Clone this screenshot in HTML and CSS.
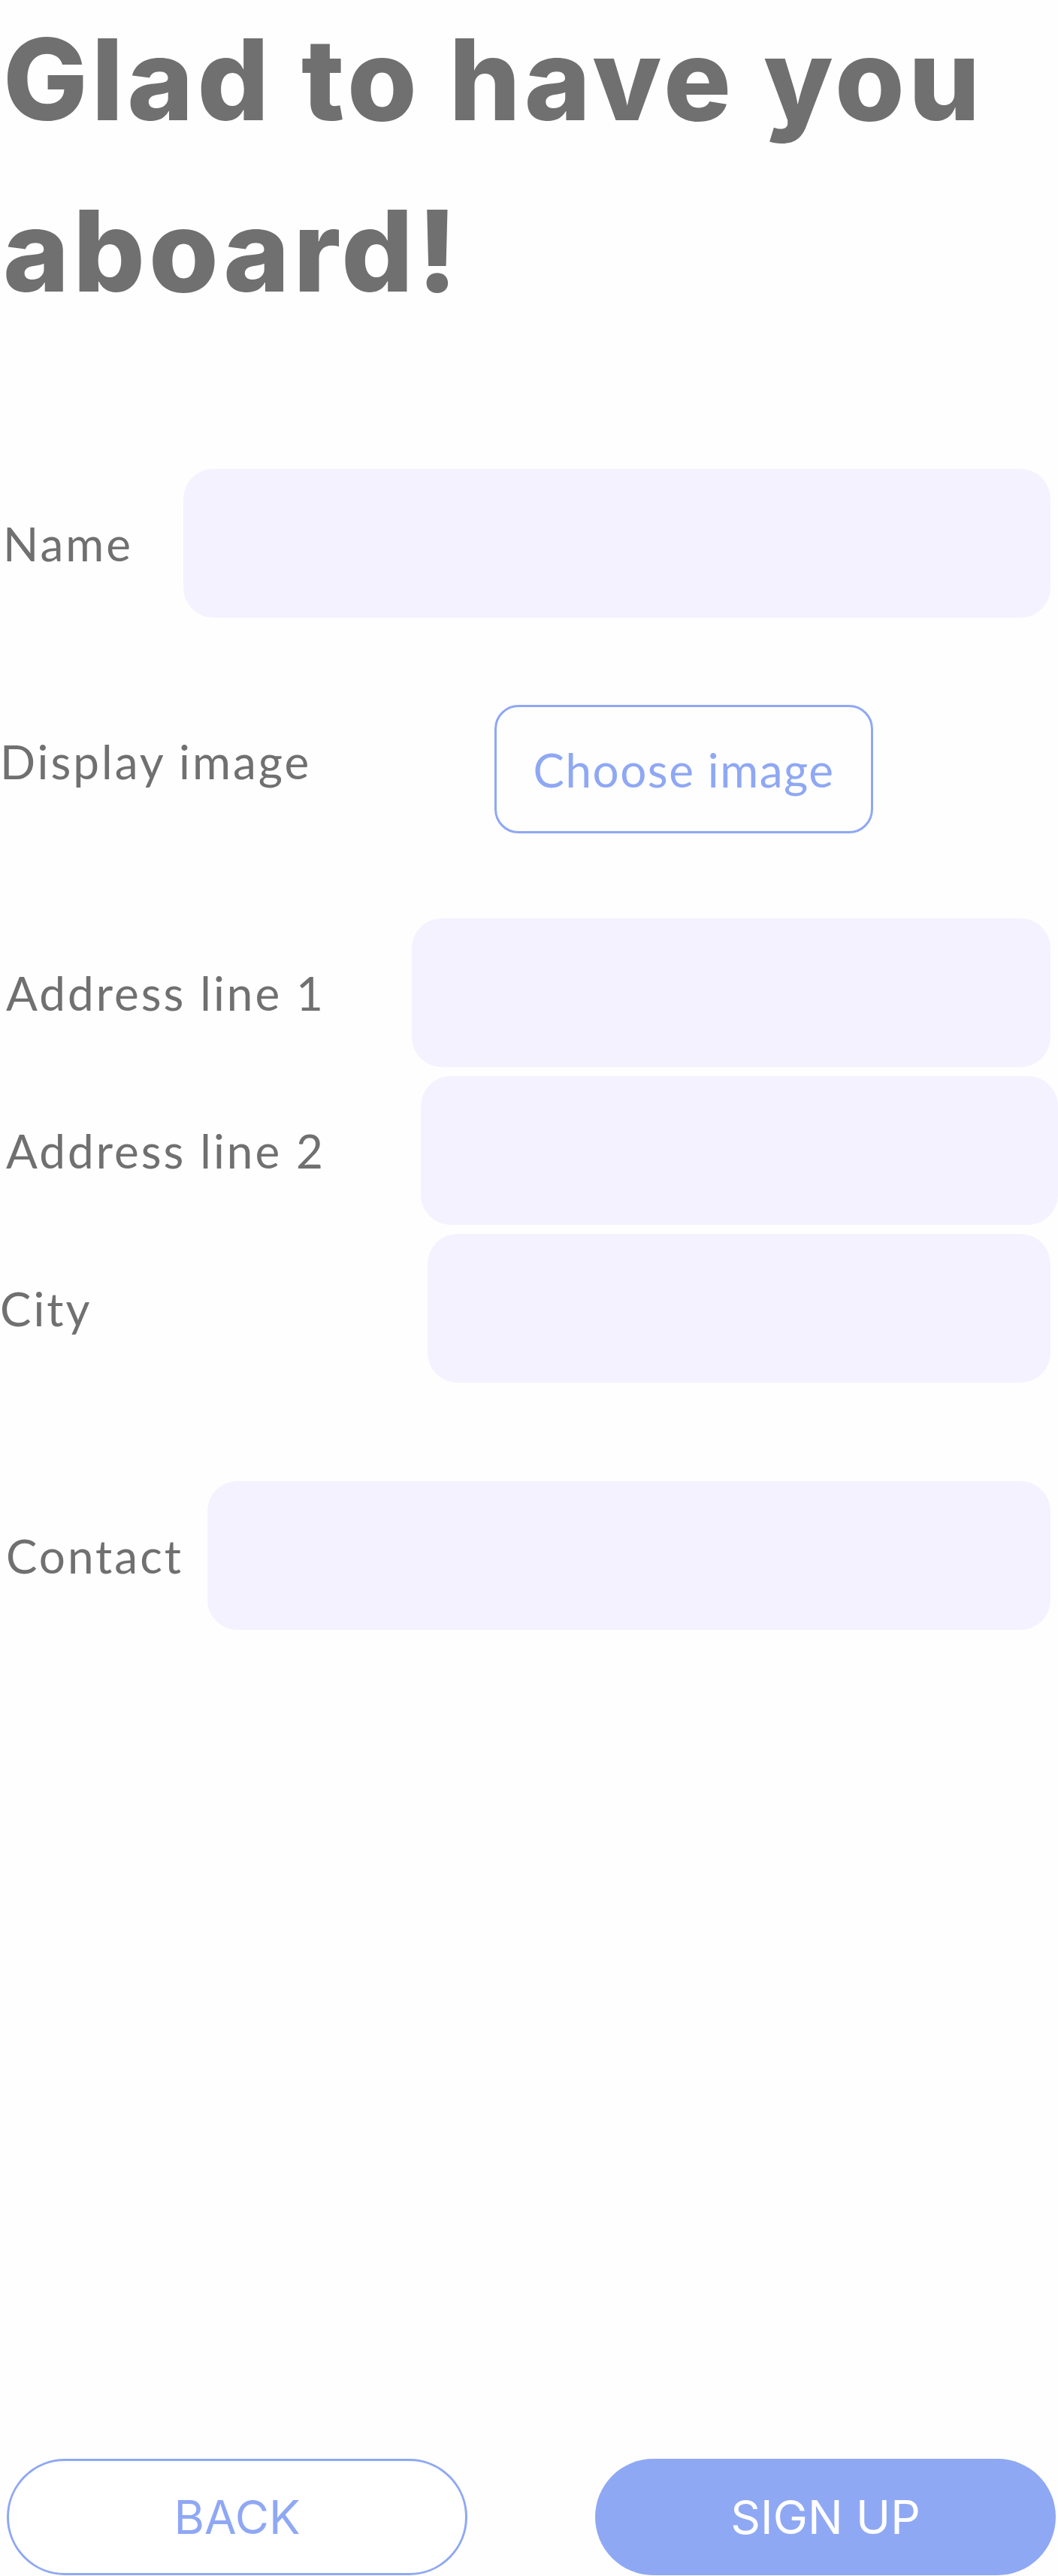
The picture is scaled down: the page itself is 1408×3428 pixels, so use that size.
FILE: index.html
```html
<!DOCTYPE html>
<html lang="en">
<head>
    <meta charset="UTF-8">
    <meta name="viewport" content="width=device-width, initial-scale=1">
    <title>Sign up - Details</title>
    <link rel="stylesheet" href="styles.css">
</head>
<body>
    <div class="page">
        <h1 class="title">Glad to have you aboard!</h1>
        <form class="form">
            <div class="form__row form__row--name">
                <label class="form__label" for="name">Name</label>
                <input class="form__input" id="name" type="text">
            </div>
            <div class="form__row form__row--image">
                <label class="form__label">Display image</label>
                <button class="form__file-btn" type="button">Choose image</button>
            </div>
            <div class="form__row form__row--addr1">
                <label class="form__label" for="addr1">Address line 1</label>
                <input class="form__input" id="addr1" type="text">
            </div>
            <div class="form__row form__row--addr2">
                <label class="form__label" for="addr2">Address line 2</label>
                <input class="form__input" id="addr2" type="text">
            </div>
            <div class="form__row form__row--city">
                <label class="form__label" for="city">City</label>
                <input class="form__input" id="city" type="text">
            </div>
            <div class="form__row form__row--contact">
                <label class="form__label" for="contact">Contact</label>
                <input class="form__input" id="contact" type="text">
            </div>
        </form>
        <div class="actions">
            <button class="btn btn--back" type="button">BACK</button>
            <button class="btn btn--signup" type="submit">SIGN UP</button>
        </div>
    </div>
</body>
</html>
```

FILE: styles.css
```css
body {
    background-color: #fefefe;
    color: #707070;
    font-family: Lato, "Noto Sans", sans-serif;
    margin: 0;
    padding: 0;
}

.page {
    display: flex;
    flex-direction: column;
    min-height: 100vh;
    overflow: hidden;
}

.title {
    font-family: Inter, "Noto Sans", sans-serif;
    font-weight: 800;
    font-size: 150px;
    line-height: 228px;
    letter-spacing: 5px;
    color: #707070;
    margin: -8px 0 0 0;
    padding-left: 4px;
}

.form {
    display: flex;
    flex-direction: column;
    margin-top: 176px;
}

.form__row {
    display: grid;
    align-items: center;
    margin-right: 10px;
}

.form__label {
    font-size: 62px;
    letter-spacing: 3px;
    color: #707070;
    white-space: nowrap;
}

.form__input {
    height: 196px;
    border: none;
    border-radius: 40px;
    background-color: #f3f2fe;
    outline: none;
}

.form__row--name {
    grid-template-columns: 244px 1fr;
}

.form__row--name .form__label {
    padding-left: 4px;
}

.form__row--image {
    grid-template-columns: 658px 504px;
    margin-top: 116px;
}

.form__row--image .form__label {
    margin-top: -22px;
}

.form__row--addr1 {
    grid-template-columns: 548px 1fr;
    margin-top: 113px;
}

.form__row--addr1 .form__label,
.form__row--addr2 .form__label,
.form__row--contact .form__label {
    padding-left: 8px;
}

.form__row--addr2 {
    grid-template-columns: 560px 1fr;
    margin-top: 12px;
    margin-right: 0;
}

.form__row--city {
    grid-template-columns: 569px 1fr;
    margin-top: 12px;
}

.form__row--contact {
    grid-template-columns: 276px 1fr;
    margin-top: 131px;
}

.form__file-btn {
    height: 171px;
    border: 3px solid #8fa8f4;
    border-radius: 32px;
    background-color: transparent;
    color: #8fa8f4;
    font-family: Lato, "Noto Sans", sans-serif;
    font-size: 62px;
    letter-spacing: 1.5px;
    padding: 0;
    cursor: pointer;
}

.actions {
    display: flex;
    gap: 170px;
    margin-top: auto;
    padding: 0 0 1px 9px;
}

.btn {
    width: 613px;
    height: 155px;
    border-radius: 78px;
    font-family: Inter, "Noto Sans", sans-serif;
    font-size: 62px;
    cursor: pointer;
}

.btn--back {
    background-color: #ffffff;
    border: 3px solid #8fa8f4;
    color: #8fa8f4;
}

.btn--signup {
    background-color: #8fa8f4;
    border: none;
    color: #ffffff;
}
```
